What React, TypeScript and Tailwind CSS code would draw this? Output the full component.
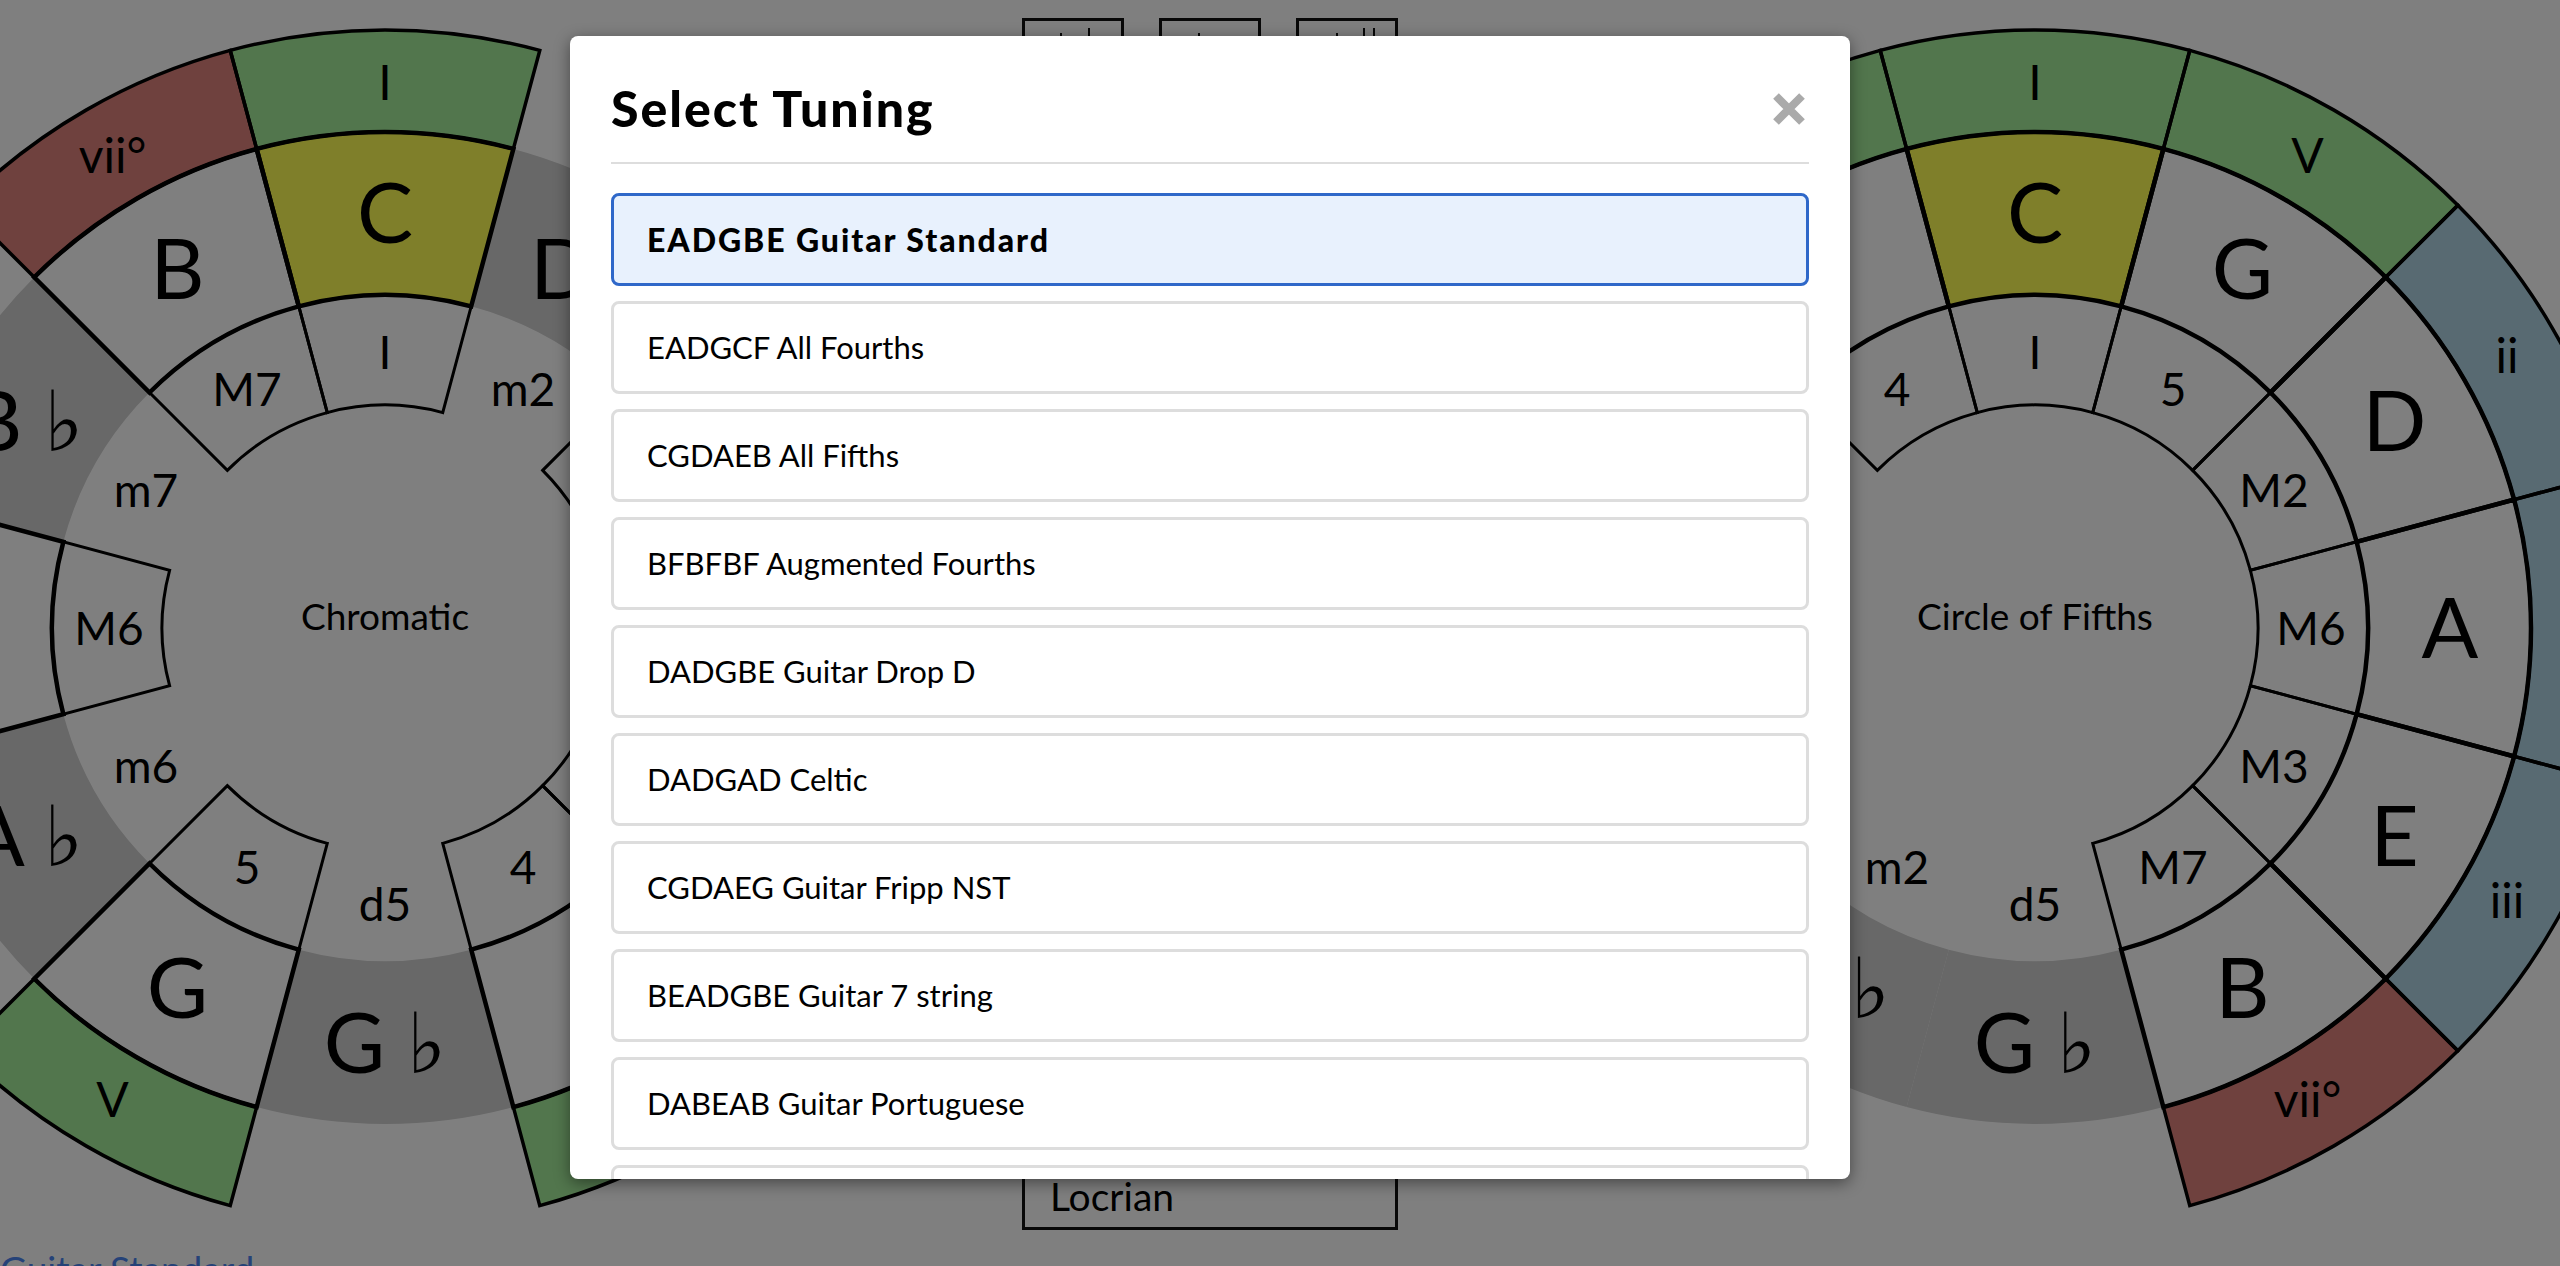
import React from 'react';
import clsx from 'clsx';

// wheel geometry (svg is 1200x1200, centre at 600,600)
const CX = 600;
const R_OUT = 598;
const R_DEG = 496;
const R_NOTE = 333;
const R_INT = 223;

const NOTES = ['C', 'D ♭', 'D', 'E ♭', 'E', 'F', 'G ♭', 'G', 'A ♭', 'A', 'B ♭', 'B'];
const INTERVALS = ['I', 'm2', 'M2', 'm3', 'M3', '4', 'd5', '5', 'm6', 'M6', 'm7', 'M7'];
const SCALE = [0, 2, 4, 5, 7, 9, 11];

const GREEN = '#a4ec9a';
const BLUE = '#b0d4e4';
const RED = '#de827c';

const DEGREES: Record<number, { label: string; fill: string }> = {
  0: { label: 'I', fill: GREEN },
  2: { label: 'ii', fill: BLUE },
  4: { label: 'iii', fill: BLUE },
  5: { label: 'IV', fill: GREEN },
  7: { label: 'V', fill: GREEN },
  9: { label: 'vi', fill: BLUE },
  11: { label: 'vii°', fill: RED },
};

const MODES = ['Ionian', 'Dorian', 'Phrygian', 'Lydian', 'Mixolydian', 'Aeolian', 'Locrian'];

const TUNINGS = [
  'EADGBE Guitar Standard',
  'EADGCF All Fourths',
  'CGDAEB All Fifths',
  'BFBFBF Augmented Fourths',
  'DADGBE Guitar Drop D',
  'DADGAD Celtic',
  'CGDAEG Guitar Fripp NST',
  'BEADGBE Guitar 7 string',
  'DABEAB Guitar Portuguese',
  'DGDGBD Guitar Open G',
  'EADG Bass Standard',
  'GDAE Violin',
];

// little glyph tops peeking out of the toolbar buttons
const BOX_MARKS = [
  [[35, 12, 8], [63, 7, 18]],
  [[36, 12, 8]],
  [[37, 12, 8], [64, 7, 18], [74, 7, 18]],
];

function pt(r: number, deg: number) {
  const a = (deg * Math.PI) / 180;
  return [CX + r * Math.sin(a), CX - r * Math.cos(a)].map((v) => v.toFixed(2));
}

function sector(r1: number, r2: number, a1: number, a2: number) {
  const [x1, y1] = pt(r2, a1);
  const [x2, y2] = pt(r2, a2);
  const [x3, y3] = pt(r1, a2);
  const [x4, y4] = pt(r1, a1);
  return `M${x1} ${y1} A${r2} ${r2} 0 0 1 ${x2} ${y2} L${x3} ${y3} A${r1} ${r1} 0 0 0 ${x4} ${y4} Z`;
}

function Label({ r, a, size, children }: { r: number; a: number; size: number; children: React.ReactNode }) {
  const rad = (a * Math.PI) / 180;
  const x = CX + r * Math.sin(rad);
  const y = CX - r * Math.cos(rad) + size * 0.36;
  return (
    <text x={x} y={y} fontSize={size} textAnchor="middle" fill="#000">
      {children}
    </text>
  );
}

function Wheel({ step, title }: { step: number; title: string }) {
  const slots = Array.from({ length: 12 }, (_, i) => {
    const s = (i * step) % 12;
    return { a: i * 30, s, inScale: SCALE.includes(s) };
  });
  const scale = slots.filter((x) => x.inScale);

  return (
    <svg width={1200} height={1200} viewBox="0 0 1200 1200" className="block shrink-0 overflow-visible">
      {/* out-of-key notes: darker band, no border */}
      {slots
        .filter((x) => !x.inScale)
        .map((x) => (
          <path key={'band' + x.s} d={sector(R_NOTE, R_DEG, x.a - 15, x.a + 15)} fill="#d0d0d0" />
        ))}

      {/* fills */}
      {scale.map((x) => (
        <g key={'fill' + x.s}>
          {x.s === 0 && <path d={sector(R_NOTE, R_DEG, x.a - 15, x.a + 15)} fill="#fefe54" />}
          <path d={sector(R_DEG, R_OUT, x.a - 15, x.a + 15)} fill={DEGREES[x.s].fill} />
        </g>
      ))}

      {/* borders */}
      {scale.map((x) => (
        <g key={'line' + x.s} fill="none" stroke="#000" strokeLinejoin="miter">
          <path d={sector(R_INT, R_NOTE, x.a - 15, x.a + 15)} strokeWidth={3} />
          <path d={sector(R_NOTE, R_DEG, x.a - 15, x.a + 15)} strokeWidth={4.5} />
          <path d={sector(R_DEG, R_OUT, x.a - 15, x.a + 15)} strokeWidth={3.5} />
        </g>
      ))}

      {/* labels */}
      {slots.map((x) => (
        <g key={'lbl' + x.s}>
          {x.inScale && (
            <Label r={545} a={x.a} size={48}>
              {DEGREES[x.s].label}
            </Label>
          )}
          <Label r={415} a={x.a} size={84}>
            {NOTES[x.s]}
          </Label>
          <Label r={276} a={x.a} size={46}>
            {INTERVALS[x.s]}
          </Label>
        </g>
      ))}

      <text x={CX} y={602} fontSize={37} textAnchor="middle" fill="#000">
        {title}
      </text>
    </svg>
  );
}

export default function App() {
  return (
    <div className="relative h-[1266px] w-full overflow-hidden bg-white font-[Lato,'DejaVu_Sans',sans-serif] text-black">
      {/* page behind the dialog */}
      <div className="ml-[-215px] flex w-[2850px] pt-[18px]">
        <div className="mt-[10px] shrink-0">
          <Wheel step={1} title="Chromatic" />
        </div>

        <div className="flex h-[1212px] w-[450px] shrink-0 flex-col justify-between px-[37px]">
          <div className="flex justify-between">
            {BOX_MARKS.map((marks, i) => (
              <div key={i} className="h-[48px] w-[102px] border-[3px] border-[#111]">
                <svg width={96} height={42} className="block">
                  {marks.map(([x, y, h], j) => (
                    <rect key={j} x={x} y={y} width={2} height={h} fill="#111" />
                  ))}
                </svg>
              </div>
            ))}
          </div>

          <div className="flex flex-col gap-[10px]">
            {MODES.map((m) => (
              <div
                key={m}
                className="flex h-[60px] items-center border-[3px] border-[#111] pb-[7px] pl-[25px] text-[39px] leading-none"
              >
                {m}
              </div>
            ))}
          </div>
        </div>

        <div className="mt-[10px] shrink-0">
          <Wheel step={7} title="Circle of Fifths" />
        </div>
      </div>

      <div className="mt-[17px] text-[37px] leading-[44px] text-[#4a84f0]">Guitar Standard</div>

      {/* backdrop */}
      <div className="absolute inset-0 bg-black/50" />

      {/* dialog */}
      <div className="absolute left-[570px] top-[36px] h-[1143px] w-[1280px] overflow-hidden rounded-[8px] bg-white px-[41px] pt-[44px] shadow-[0_4px_16px_rgba(0,0,0,0.45)]">
        <div className="flex items-center justify-between border-b-2 border-[#dddddd] pb-[25px]">
          <h2 className="text-[50px] font-black leading-[57px] tracking-[0.04em]">Select Tuning</h2>
          <button className="mr-[3px]" aria-label="close">
            <svg width={34} height={34} viewBox="0 0 34 34" className="block">
              <path d="M4 4L30 30M30 4L4 30" stroke="#aaaaaa" strokeWidth={8} />
            </svg>
          </button>
        </div>

        <div className="flex flex-col gap-[15px] pt-[29px]">
          {TUNINGS.map((t, i) => (
            <div
              key={t}
              className={clsx(
                'flex h-[93px] shrink-0 items-center rounded-[8px] border-[3px] pl-[33px]',
                i === 0
                  ? 'border-[#2f68c9] bg-[#e8f1fd] text-[32px] font-black tracking-[0.06em]'
                  : 'border-[#dddddd] bg-white text-[31px]'
              )}
            >
              {t}
            </div>
          ))}
        </div>
      </div>
    </div>
  );
}
